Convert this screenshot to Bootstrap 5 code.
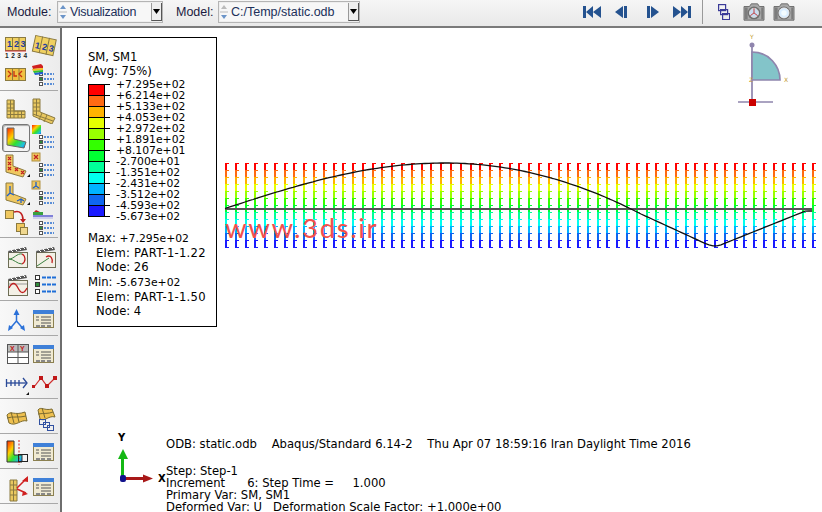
<!DOCTYPE html>
<html lang="en">
<head>
  <title>Abaqus Visualization</title>
  <meta charset="utf-8">
  <link href="https://cdn.jsdelivr.net/npm/bootstrap@5.3.0/dist/css/bootstrap.min.css" rel="stylesheet">
  <style>
    html, body { margin: 0; height: 100%; overflow: hidden; background: #fff; }
    .app-shell { width: 822px; height: 512px; overflow: hidden; }

    /* top toolbar */
    .top-bar { height: 28px; flex: none; padding-bottom: 3px; background: linear-gradient(#f6f6f6, #e9e9e9); border-bottom: 2px solid #7a7a7a; font: 12.5px "Liberation Sans", sans-serif; color: #1a1a40; }
    .bar-label { margin-left: 7px; width: 50px; }
    .bar-label-model { margin-left: 13px; width: 42px; }
    .combo-box { height: 22px; background: #f7f7f7; border: 1px solid #b4b4b4; box-shadow: 0 0 0 1px #eee inset; }
    .combo-module { width: 106px; }
    .combo-model { width: 142px; }
    .combo-text { padding-left: 2px; color: #20305a; line-height: 20px; }
    .combo-tight { letter-spacing: -.3px; }
    .combo-drop { width: 11px; background: #eee; border-left: 1px solid #999; border-right: 1px solid #555; border-bottom: 1px solid #555; margin: 1px 0; }
    .play-group { margin-left: 223px; gap: 14px; }
    .play-gap { margin-left: 6px; }
    .bar-divider { width: 1px; height: 24px; background: #999; margin-left: 11px; margin-right: 15px; }
    .bar-overlay { margin-right: 12px; }
    .bar-camera { margin-right: 6px; }

    /* left toolbar */
    .side-bar { width: 62px; flex: none; background: linear-gradient(90deg, #f8f8f8, #ececec); border-right: 2px solid #6e6e6e; overflow: hidden; }
    .tool-group { padding: 5px 0 1px 2px; border-bottom: 1px solid #a8a8a8; display: grid; grid-template-columns: 28px 28px; grid-auto-rows: 28px; margin-right: 2px; }
    .tool-group svg { display: block; }
    .tool-pressed { background: #f4f4f4; border: 1px solid #777; border-radius: 3px; box-shadow: inset 1px 1px 1px #aaa; }
    .tool-pressed svg { margin: -1px; }

    /* viewport */
    .view-port { flex: 1 1 auto; position: relative; background: #fff; overflow: hidden; }
    .mesh-layer { position: absolute; left: 0; top: 0; width: 760px; height: 484px; }
    .legend-box { position: absolute; left: 15px; top: 9px; width: 140px; height: 290px; border: 1px solid #000; padding: 12px 0 0 10px; background: #fff; }
    .vp-text { font: 11.6px/1 "DejaVu Sans", sans-serif; color: #000; }
    .vp-lines { white-space: pre; }
    .vp-num { font-size: 10.8px; }
    .legend-title { line-height: 14px; }
    .legend-scale { margin-top: 1px; }
    .legend-bar { display: block; margin-top: 5px; margin-right: 5px; }
    .legend-labels { line-height: 11px; font-size: 10.8px; white-space: pre; }
    .legend-stat { line-height: 14px; margin-top: 9px; }
    .legend-stat + .legend-stat { margin-top: 1px; }
    .stat-indent { padding-left: 8px; }
    .stat-wide { letter-spacing: .25px; }
    .water-mark { position: absolute; left: 163px; top: 186px; font: 400 27.5px/1 Lato, sans-serif; color: #f2504c; letter-spacing: 1.6px; white-space: pre; }
    .info-odb { position: absolute; left: 104px; top: 411px; }
    .info-step { position: absolute; left: 104px; top: 437px; line-height: 12px; }
    .axis-tag { font-family: "DejaVu Sans", sans-serif; font-weight: 700; font-size: 10px; }
  </style>
</head>
<body>

<!-- icon sheet -->
<svg width="0" height="0" class="position-absolute">
  <defs>
    <symbol id="opt" viewBox="0 0 28 28">
      <g stroke="#555" stroke-width="1" fill="#fff"><rect x="9.5" y="11.5" width="3" height="3"/><rect x="9.5" y="16.5" width="3" height="3" fill="#2e8b3a"/><rect x="9.5" y="21.5" width="3" height="3"/></g>
      <g stroke="#2a6fd0" stroke-width="1.5" stroke-dasharray="2 1"><path d="M14 13h10M14 18h10M14 23h10"/></g>
    </symbol>
    <symbol id="win" viewBox="0 0 28 28">
      <rect x="3.500" y="4.500" width="20" height="17" fill="#f0ead2" stroke="#8b8050"/>
      <rect x="3" y="4" width="21" height="4" fill="#3f80d8"/>
      <path d="M6 11h3M6 14h3M11 11h10M11 14h10M11 17h10" stroke="#555"/>
      <path d="M6 20h4M11 20h4M17 20h4" stroke="#888" stroke-width="2"/>
    </symbol>
    <symbol id="lmesh" viewBox="0 0 28 28">
      <path d="M5 4h7v11h11v7H5z" fill="#e9c860" stroke="#8b7a40"/>
      <path d="M5 8h7M5 12h7M5 15h18M5 18.500h18M8.500 4v18M12 4v18M16 15v7M19.500 15v7" stroke="#8b7a40" fill="none"/>
    </symbol>
    <symbol id="lbent" viewBox="0 0 28 28">
      <path d="M3 3h7v13l15 6-3 6-19-8z" fill="#e9c860" stroke="#8b7a40"/>
      <path d="M3 7h7M3 11h7M3 15h7M6.500 3v17M12 17l-3 7M17 19l-3 7M3 18l20 7" stroke="#8b7a40" fill="none"/>
    </symbol>
    <linearGradient id="rainbow" x1="0" y1="0" x2="1" y2="1">
      <stop offset="0" stop-color="#ff2000"/><stop offset=".35" stop-color="#ffd000"/><stop offset=".6" stop-color="#30e030"/><stop offset=".85" stop-color="#20c0e0"/><stop offset="1" stop-color="#1060e0"/>
    </linearGradient>
    <symbol id="movie" viewBox="0 0 28 28">
      <rect x="6.500" y="9.500" width="19" height="15" fill="#f3f0e6" stroke="#6d6d55"/>
      <path d="M6 8l18-4 1 3-18 3z" fill="#555"/>
      <path d="M9 7l2 2M13 6l2 2M17 5l2 2M21 4l2 2" stroke="#fff"/>
    </symbol>
    <symbol id="camera" viewBox="0 0 26 22">
      <path d="M2 5h6l2-3h7l2 3h5v15H2z" fill="#a8a8a8" stroke="#666"/>
      <path d="M3 6h3v13H3zM21 6h2v13h-2z" fill="#7c7c7c"/>
      <circle cx="13" cy="12" r="7" fill="#6f6f6f"/>
    </symbol>
  </defs>
</svg>

<div class="app-shell d-flex flex-column">

  <!-- top toolbar -->
  <div class="top-bar d-flex align-items-center">
    <span class="bar-label">Module:</span>
    <div class="combo-box combo-module d-flex align-items-stretch">
      <svg width="10" height="20"><path d="M5 3l3 4H2z" fill="#6b94c8"/><path d="M5 17l3-4H2z" fill="#6b94c8"/><path d="M1 10h8" stroke="#bbb"/></svg>
      <span class="combo-text combo-tight flex-grow-1">Visualization</span>
      <span class="combo-drop d-flex align-items-center justify-content-center"><svg width="7" height="5"><path d="M0 0h7L3.500 5z" fill="#000"/></svg></span>
    </div>
    <span class="bar-label-model">Model:</span>
    <div class="combo-box combo-model d-flex align-items-stretch">
      <svg width="10" height="20"><path d="M5 3l3 4H2z" fill="#bbb"/><path d="M5 17l3-4H2z" fill="#6b94c8"/><path d="M1 10h8" stroke="#bbb"/></svg>
      <span class="combo-text flex-grow-1">C:/Temp/static.odb</span>
      <span class="combo-drop d-flex align-items-center justify-content-center"><svg width="7" height="5"><path d="M0 0h7L3.500 5z" fill="#000"/></svg></span>
    </div>
    <div class="play-group d-flex align-items-center">
      <svg width="18" height="12"><path d="M0 0h3v12H0zM10 0v12L3 6zM18 0v12l-8-6z" fill="#24528f"/></svg>
      <svg width="12" height="12"><path d="M8 0v12L0 6zM9 0h3v12H9z" fill="#24528f"/></svg>
      <svg width="12" height="12" class="play-gap"><path d="M0 0h3v12H0zM4 0v12l8-6z" fill="#24528f"/></svg>
      <svg width="18" height="12"><path d="M0 0v12l8-6zM8 0v12l7-6zM15 0h3v12h-3z" fill="#24528f"/></svg>
    </div>
    <span class="bar-divider"></span>
    <svg width="12" height="16" class="bar-overlay"><g fill="none" stroke="#3b3b98" stroke-width="1.200"><rect x=".6" y=".6" width="7" height="6"/><rect x="2.600" y="5.600" width="7" height="5"/><rect x="4.600" y="9.600" width="7" height="6"/></g></svg>
    <svg width="24" height="20" viewBox="0 0 26 22" class="bar-camera"><use href="#camera"/><circle cx="13" cy="12" r="5" fill="#c8dcf0" stroke="#ddd"/><path d="M13 12V7M13 12l-4 3M13 12l4 3" stroke="#c03030"/></svg>
    <svg width="24" height="20" viewBox="0 0 26 22"><use href="#camera"/><circle cx="13" cy="12" r="5.500" fill="#d8ecff" stroke="#eee"/><circle cx="13" cy="12" r="3" fill="#f2fbff"/></svg>
  </div>

  <div class="d-flex flex-grow-1 overflow-hidden">

    <!-- left toolbar -->
    <div class="side-bar">
      <div class="tool-group">
        <svg width="28" height="28"><rect x="3.500" y="4.500" width="20" height="13" fill="#f0d060" stroke="#8b7a40"/><path d="M10.500 4v14M17 4v14" stroke="#8b7a40"/><path d="M3 18h21" stroke="#d03030"/><text x="5" y="14" font-family="Liberation Sans" font-size="9" font-weight="700" fill="#1c3aa0">1</text><text x="12" y="14" font-family="Liberation Sans" font-size="9" font-weight="700" fill="#1c3aa0">2</text><text x="18.500" y="14" font-family="Liberation Sans" font-size="9" font-weight="700" fill="#1c3aa0">3</text><text x="3" y="25" font-family="Liberation Sans" font-size="6.500" font-weight="700" fill="#222" textLength="22">1 2 3 4</text></svg>
        <svg width="28" height="28"><g transform="rotate(12 14 14)"><rect x="3.500" y="4.500" width="21" height="16" fill="#f0d060" stroke="#8b7a40"/><path d="M10.500 4v17M17.500 4v17" stroke="#8b7a40"/><text x="5" y="17" font-family="Liberation Sans" font-size="9" font-weight="700" fill="#1c3aa0">1</text><text x="12" y="17" font-family="Liberation Sans" font-size="9" font-weight="700" fill="#1c3aa0">2</text><text x="19" y="17" font-family="Liberation Sans" font-size="9" font-weight="700" fill="#1c3aa0">3</text></g></svg>
        <svg width="28" height="28"><rect x="3.500" y="7.500" width="20" height="12" fill="#f0c040" stroke="#8b7a40"/><path d="M10.500 7v13M17 7v13" stroke="#8b7a40"/><path d="M6 10l3 3-3 3M20 10l-3 3 3 3M12 10v5h3" fill="none" stroke="#c83010" stroke-width="1.300"/></svg>
        <svg width="28" height="28"><use href="#opt" x="0" y="0"/><path d="M2 5l9-2 2 2v2l-10 1z" fill="#d02020"/><path d="M2 8l11-1v2l-10 1z" fill="#f0c020"/><path d="M3 10l10-1v2l-9 1z" fill="#30c030"/><path d="M4 12l9-1v2l-8 1z" fill="#2060d0"/></svg>
      </div>
      <div class="tool-group">
        <svg width="28" height="28"><use href="#lmesh"/></svg>
        <svg width="28" height="28"><use href="#lbent"/></svg>
        <div class="tool-pressed"><svg width="28" height="28"><path d="M5 4h7v11l12 3-2 6-17-3z" fill="url(#rainbow)" stroke="#666"/></svg></div>
        <svg width="28" height="28"><use href="#opt"/><rect x="2" y="1" width="9" height="9" fill="url(#rainbow)"/></svg>
        <svg width="28" height="28"><path d="M4 3h7v11l13 5-3 6-17-5z" fill="#f0c860" stroke="#8b7a40"/><path d="M6 5l3 3M9 5l-3 3M6 10l3 3M9 10l-3 3M6 15l3 3M9 15l-3 3M13 16l3 3M16 16l-3 3M19 19l3 3M22 19l-3 3" stroke="#c02020" stroke-width="1.200"/><path d="M25 25h3v-3z" fill="#111"/></svg>
        <svg width="28" height="28"><use href="#opt"/><rect x="2" y="1" width="8" height="8" fill="#f0c860" stroke="#b09040"/><path d="M4 3l4 4M8 3l-4 4" stroke="#c02020" stroke-width="1.300"/></svg>
        <svg width="28" height="28"><path d="M4 3h7v11l13 5-3 6-17-5z" fill="#f0c860" stroke="#8b7a40"/><path d="M8 6v8M5 16l3-3 4 2M19 19v4M15 21l4-2 3 2" stroke="#2060c8" stroke-width="1.300" fill="none"/><path d="M25 25h3v-3z" fill="#111"/></svg>
        <svg width="28" height="28"><use href="#opt"/><rect x="2" y="1" width="8" height="8" fill="#f0c860" stroke="#b09040"/><path d="M6 2v4M3 8l3-2 3 2" stroke="#2060c8" stroke-width="1.300" fill="none"/></svg>
        <svg width="28" height="28"><rect x="3.500" y="2.500" width="8" height="8" fill="#f0c860" stroke="#8b7a40"/><rect x="14.500" y="15.500" width="8" height="8" fill="#f0c860" stroke="#8b7a40"/><rect x="18.500" y="19.500" width="7" height="7" fill="#f0d890" stroke="#8b7a40"/><path d="M12 4c6-2 9 2 9 8" fill="none" stroke="#c02020" stroke-width="1.600"/><path d="M18 11h6l-3 4z" fill="#c02020"/></svg>
        <svg width="28" height="28"><use href="#opt" y="2"/><path d="M3 4h10v3H3z" fill="#3aa040"/><path d="M6 2l4 2H4z" fill="#c02020"/><path d="M3 7h20v2H3z" fill="#8080d8"/><path d="M3 10h20" stroke="#b0b0e8"/></svg>
      </div>
      <div class="tool-group">
        <svg width="28" height="28"><use href="#movie"/><path d="M7 16c5 0 8-6 13-5M7 16c5 0 8 5 13 5" fill="none" stroke="#3a8040"/><path d="M20 11c4 2 4 8 0 10" fill="none" stroke="#c02020" stroke-width="1.300"/></svg>
        <svg width="28" height="28"><use href="#movie"/><path d="M7 23l12-8" fill="none" stroke="#3a8040"/><path d="M16 14c5-3 7 2 6 6" fill="none" stroke="#c02020" stroke-width="1.300"/></svg>
        <svg width="28" height="28"><use href="#movie"/><path d="M7 13h18" stroke="#999"/><path d="M7 17c3-6 6-6 9 0s6 6 9 0" fill="none" stroke="#c02020" stroke-width="1.300"/></svg>
        <svg width="28" height="28"><g stroke="#333" fill="#fff"><rect x="5.500" y="4.500" width="4" height="4"/><rect x="5.500" y="11.500" width="4" height="4" fill="#2e8b3a"/><rect x="5.500" y="18.500" width="4" height="4"/></g><path d="M12 6.500h14M12 13.500h14M12 20.500h14" stroke="#1f6fd8" stroke-width="2" stroke-dasharray="4 1"/></svg>
      </div>
      <div class="tool-group">
        <svg width="28" height="28"><path d="M14.500 15V8M14.500 15l-6 7M14.500 15l6 7" stroke="#2a70d8" stroke-width="1.500"/><path d="M14.500 3l3 6h-6zM6 25l1-6 4 3zM23 25l-5-3 4-3z" fill="#2a70d8"/></svg>
        <svg width="28" height="28"><use href="#win"/></svg>
      </div>
      <div class="tool-group">
        <svg width="28" height="28"><rect x="5.500" y="3.500" width="21" height="19" fill="#fff" stroke="#555"/><rect x="6" y="4" width="20" height="7" fill="#bbb"/><path d="M16 4v18M6 11h20M6 16.500h20" stroke="#555"/><text x="8" y="10" font-family="Liberation Sans" font-size="7" font-weight="700" fill="#c02020">X</text><text x="18" y="10" font-family="Liberation Sans" font-size="7" font-weight="700" fill="#c02020">Y</text></svg>
        <svg width="28" height="28"><use href="#win"/></svg>
        <svg width="28" height="28"><path d="M4 14h21" stroke="#2a4a98" stroke-width="1.300"/><path d="M4.500 10v8M9 11v6M13 11v6M17 11v6M21 9l4 5-4 5" fill="none" stroke="#2a4a98" stroke-width="1.300"/><path d="M24 26h3v-3z" fill="#111"/></svg>
        <svg width="28" height="28"><path d="M4 18l7-9 6 8 8-8" fill="none" stroke="#d03030" stroke-width="1.200"/><path d="M9 7h4v4H9zM15 15h4v4h-4zM23 7h4v4h-4zM2 16h3v3H2z" fill="#c01818"/></svg>
      </div>
      <div class="tool-group">
        <svg width="28" height="28"><path d="M5 11c4-5 7 1 18-3l2 9c-6-2-11 6-18 2z" fill="#eec050" stroke="#7a6a30"/><path d="M9 8l3 11M15 10l2 8M5 14c6-2 12 0 19-2" fill="none" stroke="#7a6a30"/></svg>
        <svg width="28" height="28"><path d="M8 6c3-4 6 1 14-1l3 8c-6-2-10 5-15 2z" fill="#eec050" stroke="#7a6a30"/><path d="M12 4l3 10M8 10c6-1 10 0 15-2" fill="none" stroke="#7a6a30"/><g fill="none" stroke="#3050a0"><rect x="9.500" y="15.500" width="6" height="5"/><rect x="13.500" y="18.500" width="6" height="5"/><rect x="17.500" y="21.500" width="6" height="5"/></g></svg>
      </div>
      <div class="tool-group">
        <svg width="28" height="28"><path d="M5 2h7v14h8v7H5z" fill="url(#rainbow)" stroke="#333"/><path d="M17 1v25" stroke="#d02020" stroke-dasharray="2 1.500"/><rect x="16.500" y="15.500" width="9" height="7" fill="none" stroke="#222"/></svg>
        <svg width="28" height="28"><use href="#win"/></svg>
      </div>
      <div class="tool-group">
        <svg width="28" height="28"><path d="M8 6h7v21H8z" fill="#e9c860" stroke="#8b7a40"/><path d="M8 11h7M8 16h7M8 21h7M11.500 6v21" stroke="#8b7a40"/><path d="M15 14L25 4M15 15l9 4" stroke="#d02020" stroke-width="1.500"/><path d="M26 2v6l-6-1zM26 20l-6 2 1-5z" fill="#d02020"/></svg>
        <svg width="28" height="28"><use href="#win"/></svg>
      </div>
    </div>

    <!-- graphics viewport -->
    <div class="view-port">
      <svg class="mesh-layer" id="meshLayer" viewBox="62 28 760 484" shape-rendering="crispEdges"></svg>

      <svg class="mesh-layer" viewBox="62 28 760 484">
        <!-- view manipulator -->
        <g fill="none" stroke="#8f85ad" stroke-width="1.700">
          <path d="M752 45v57M738 102h35"/>
          <path d="M752 80V52c17 0 28 14 28 28z" fill="#83c4c9"/>
        </g>
        <circle cx="752" cy="45" r="2.500" fill="#8f85ad"/>
        <rect x="749" y="99" width="7" height="7" fill="#cc0000"/>
        <text x="750" y="39" font-family="DejaVu Sans" font-size="6" fill="#c09a30">Y</text>
        <text x="784" y="82" font-family="DejaVu Sans" font-size="6" fill="#c09a30">X</text>
        <text x="749" y="82" font-family="DejaVu Sans" font-size="6" fill="#c09a30">Z</text>

        <!-- global triad -->
        <path d="M122.500 478v-24" stroke="#14b814" stroke-width="3"/>
        <path d="M123 449l5 10h-10z" fill="#14b814"/>
        <path d="M124 478.500h21" stroke="#a81818" stroke-width="3"/>
        <path d="M153 478.500l-10-4v8z" fill="#a81818"/>
        <rect x="120" y="475" width="6" height="7" rx="2" fill="#12128c"/>
        <text class="axis-tag" x="118" y="441">Y</text>
        <text class="axis-tag" x="158" y="482">X</text>
      </svg>

      <div class="legend-box vp-text">
        <div class="legend-title">SM, SM1</div>
        <div class="legend-title">(Avg: 75%)</div>
        <div class="legend-scale d-flex">
          <svg class="legend-bar" id="legendBar" width="23" height="134" shape-rendering="crispEdges"></svg>
          <div class="legend-labels">+7.295e+02
+6.214e+02
+5.133e+02
+4.053e+02
+2.972e+02
+1.891e+02
+8.107e+01
-2.700e+01
-1.351e+02
-2.431e+02
-3.512e+02
-4.593e+02
-5.673e+02</div>
        </div>
        <div class="legend-stat">
          <div>Max: <span class="vp-num">+7.295e+02</span></div>
          <div class="stat-indent stat-wide">Elem: PART-1-1.22</div>
          <div class="stat-indent">Node: 26</div>
        </div>
        <div class="legend-stat">
          <div>Min: <span class="vp-num">-5.673e+02</span></div>
          <div class="stat-indent stat-wide">Elem: PART-1-1.50</div>
          <div class="stat-indent">Node: 4</div>
        </div>
      </div>

      <div class="water-mark">www.3ds.ir</div>

      <div class="info-odb vp-text vp-lines">ODB: static.odb    Abaqus/Standard 6.14-2    Thu Apr 07 18:59:16 Iran Daylight Time 2016</div>
      <div class="info-step vp-text vp-lines">Step: Step-1
Increment      6: Step Time =     1.000
Primary Var: SM, SM1
Deformed Var: U   Deformation Scale Factor: +1.000e+00</div>
    </div>
  </div>
</div>

<script src="https://cdn.jsdelivr.net/npm/bootstrap@5.3.0/dist/js/bootstrap.bundle.min.js"></script>
<script>
  const bands = ["#ff0000", "#ff6a13", "#ffb300", "#e5ff00", "#99ff00", "#33ff00",
                 "#00ff33", "#00ff99", "#00ffee", "#00b3ff", "#0f66f0", "#1a1aff"];
  const NS = "http://www.w3.org/2000/svg";

  function add(parent, tag, attrs) {
    const el = document.createElementNS(NS, tag);
    for (const k in attrs) el.setAttribute(k, attrs[k]);
    parent.appendChild(el);
    return el;
  }

  // legend colour bar with its ticks
  const bar = document.getElementById("legendBar");
  bands.forEach((c, i) => add(bar, "rect", { x: 0.5, y: 0.5 + i * 11, width: 16, height: 11, fill: c, stroke: "#000" }));
  for (let i = 0; i <= 12; i++) add(bar, "path", { d: `M16 ${0.5 + i * 11}h6`, stroke: "#000" });

  // deformed mesh, drawn edge-on: a 2px spine and a tick per colour band, 61 columns
  const mesh = document.getElementById("meshLayer");
  const top0 = 163, pitch = 7, cols = 61;
  bands.forEach((c, b) => {
    let spine = "", ticks = "";
    for (let i = 0; i < cols; i++) {
      const x = Math.round(225 + i * 9.78);
      const y = top0 + b * pitch;
      spine += `M${x + 1} ${y}v${pitch}`;
      ticks += `M${x} ${y + 0.5}h4`;
      if (b === bands.length - 1) ticks += `M${x} ${y + pitch + 0.5}h4`;
    }
    add(mesh, "path", { d: spine, stroke: c, fill: "none", "stroke-width": 2 });
    add(mesh, "path", { d: ticks, stroke: c, fill: "none", "stroke-width": 1 });
  });

  // undeformed line and the deformed curve on top
  add(mesh, "path", { d: "M225 209H812", stroke: "#555", fill: "none", "stroke-width": 2 });

  function curveY(x) {
    if (x <= 445) return 208.5 - 45.5 * Math.sin((x - 225) / 220 * Math.PI / 2);
    if (x <= 640) return 163 + 0.00133 * (x - 445) * (x - 445);
    if (x <= 707) return 213.5 + (x - 640) * 0.46;
    if (x <= 723) return 246 - 2 * Math.pow((x - 715) / 8, 2);
    return Math.max(211, 244 - (x - 723) * 0.4);
  }
  const pts = [];
  for (let x = 225; x <= 812; x += 4) pts.push(x + "," + curveY(x).toFixed(1));
  pts.push("812,211");
  add(mesh, "polyline", { points: pts.join(" "), stroke: "#111", fill: "none",
                          "stroke-width": 1.3, "shape-rendering": "auto" });
</script>
</body>
</html>
